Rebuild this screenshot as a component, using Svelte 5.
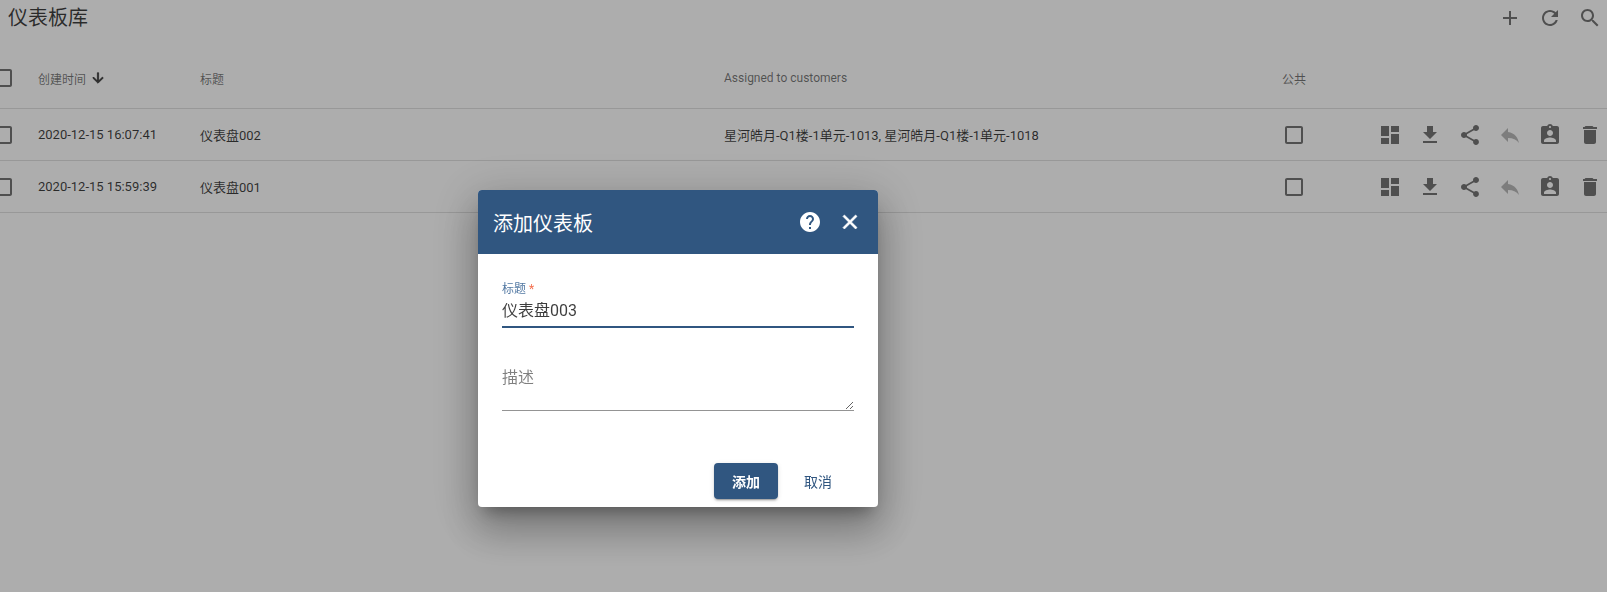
<script lang="ts">
  const paths = {
    add: 'M19 13h-6v6h-2v-6H5v-2h6V5h2v6h6v2z',
    refresh: 'M17.65 6.35C16.2 4.9 14.21 4 12 4c-4.42 0-7.99 3.58-7.99 8s3.57 8 7.99 8c3.73 0 6.84-2.55 7.73-6h-2.08c-.82 2.33-3.04 4-5.65 4-3.31 0-6-2.69-6-6s2.69-6 6-6c1.66 0 3.14.69 4.22 1.78L13 11h7V4l-2.35 2.35z',
    search: 'M15.5 14h-.79l-.28-.27C15.41 12.59 16 11.11 16 9.5 16 5.91 13.09 3 9.5 3S3 5.91 3 9.5 5.91 16 9.5 16c1.61 0 3.09-.59 4.23-1.57l.27.28v.79l5 4.99L20.49 19l-4.99-5zm-6 0C7.01 14 5 11.99 5 9.5S7.01 5 9.5 5 14 7.01 14 9.5 11.99 14 9.5 14z',
    dashboard: 'M3 13h8V3H3v10zm0 8h8v-6H3v6zm10 0h8V11h-8v10zm0-18v6h8V3h-8z',
    download: 'M19 9h-4V3H9v6H5l7 7 7-7zM5 18v2h14v-2H5z',
    share: 'M18 16.08c-.76 0-1.44.3-1.96.77L8.91 12.7c.05-.23.09-.46.09-.7s-.04-.47-.09-.7l7.05-4.11c.54.5 1.25.81 2.04.81 1.66 0 3-1.34 3-3s-1.34-3-3-3-3 1.34-3 3c0 .24.04.47.09.7L8.04 9.81C7.5 9.31 6.79 9 6 9c-1.66 0-3 1.34-3 3s1.34 3 3 3c.79 0 1.5-.31 2.04-.81l7.12 4.16c-.05.21-.08.43-.08.65 0 1.61 1.31 2.92 2.92 2.92 1.61 0 2.92-1.31 2.92-2.92s-1.31-2.92-2.92-2.92z',
    reply: 'M10 9V5l-7 7 7 7v-4.1c5 0 8.5 1.6 11 5.1-1-5-4-10-11-11z',
    assign: 'M19 3h-4.18C14.4 1.84 13.3 1 12 1c-1.3 0-2.4.84-2.82 2H5c-1.1 0-2 .9-2 2v14c0 1.1.9 2 2 2h14c1.1 0 2-.9 2-2V5c0-1.1-.9-2-2-2zm-7 0c.55 0 1 .45 1 1s-.45 1-1 1-1-.45-1-1 .45-1 1-1zm0 4c1.66 0 3 1.34 3 3s-1.34 3-3 3-3-1.34-3-3 1.34-3 3-3zm6 12H6v-1.4c0-2 4-3.1 6-3.1s6 1.1 6 3.1V19z',
    trash: 'M6 19c0 1.1.9 2 2 2h8c1.1 0 2-.9 2-2V7H6v12zM19 4h-3.5l-1-1h-7l-1 1H5v2h14V4z',
    help: 'M12 2C6.48 2 2 6.48 2 12s4.48 10 10 10 10-4.48 10-10S17.52 2 12 2zm1 17h-2v-2h2v2zm2.07-7.75l-.9.92C13.45 12.9 13 13.5 13 15h-2v-.5c0-1.1.45-2.1 1.17-2.83l1.24-1.26c.37-.36.59-.86.59-1.41 0-1.1-.9-2-2-2s-2 .9-2 2H8c0-2.21 1.79-4 4-4s4 1.79 4 4c0 .88-.36 1.68-.93 2.25z',
    close: 'M19 6.41L17.59 5 12 10.59 6.41 5 5 6.41 10.59 12 5 17.59 6.41 19 12 13.41 17.59 19 19 17.59 13.41 12z',
    box: 'M19 5v14H5V5h14m0-2H5c-1.1 0-2 .9-2 2v14c0 1.1.9 2 2 2h14c1.1 0 2-.9 2-2V5c0-1.1-.9-2-2-2z',
    arrow: 'M20 12l-1.41-1.41L13 16.17V4h-2v12.17l-5.58-5.59L4 12l8 8 8-8z'
  };

  const dashboards = [
    { created: '2020-12-15 16:07:41', title: '仪表盘002', customers: '星河皓月-Q1楼-1单元-1013, 星河皓月-Q1楼-1单元-1018' },
    { created: '2020-12-15 15:59:39', title: '仪表盘001', customers: '' }
  ];

  const toolbar = [paths.add, paths.refresh, paths.search];
  const actions = [
    { d: paths.dashboard },
    { d: paths.download },
    { d: paths.share },
    { d: paths.reply, off: true },
    { d: paths.assign },
    { d: paths.trash }
  ];
</script>

{#snippet icon(d: string, cls = '')}
  <svg class="icon {cls}" viewBox="0 0 24 24" aria-hidden="true"><path {d} /></svg>
{/snippet}

<div class="page">
  <header class="topbar">
    <h1>仪表板库</h1>
    <div class="tools">
      {#each toolbar as d}
        <span class="btn">{@render icon(d)}</span>
      {/each}
    </div>
  </header>

  <div class="row head">
    <span>{@render icon(paths.box)}</span>
    <span class="sorted">创建时间 {@render icon(paths.arrow, 'sort')}</span>
    <span>标题</span>
    <span>Assigned to customers</span>
    <span>公共</span>
    <span></span>
  </div>

  {#each dashboards as item}
    <div class="row">
      <span>{@render icon(paths.box)}</span>
      <span>{item.created}</span>
      <span>{item.title}</span>
      <span>{item.customers}</span>
      <span>{@render icon(paths.box)}</span>
      <span class="actions">
        {#each actions as a}
          <span class="btn" class:off={a.off}>{@render icon(a.d)}</span>
        {/each}
      </span>
    </div>
  {/each}
</div>

<div class="overlay">
  <section class="dialog">
    <header class="dialog-head">
      <h2>添加仪表板</h2>
      <span class="btn">{@render icon(paths.help)}</span>
      <span class="btn">{@render icon(paths.close, 'bold')}</span>
    </header>

    <div class="dialog-body">
      <label class="field focused">
        <span class="label">标题 <em>*</em></span>
        <input value="仪表盘003" />
      </label>
      <label class="field">
        <textarea placeholder="描述" rows="2"></textarea>
      </label>
    </div>

    <footer class="dialog-foot">
      <button class="primary">添加</button>
      <button class="plain">取消</button>
    </footer>
  </section>
</div>

<style>
  :global(body) {
    overflow: hidden;
    background: #fff;
    font-family: Roboto, "Noto Sans CJK SC", sans-serif;
  }

  .page {
    width: 1619px;
    margin-left: -9px;
    color: rgba(0, 0, 0, 0.76);
  }

  .topbar {
    display: flex;
    justify-content: space-between;
    height: 48px;
    padding-left: 17px;
    box-sizing: border-box;
  }

  h1 {
    margin: 0;
    font-size: 20px;
    font-weight: 400;
    line-height: 36px;
  }

  .tools {
    display: flex;
    height: 36px;
  }

  .btn {
    display: inline-flex;
    align-items: center;
    justify-content: center;
    width: 40px;
    height: 36px;
  }

  .btn.off {
    opacity: 0.5;
  }

  .icon {
    display: block;
    width: 24px;
    height: 24px;
    fill: rgba(0, 0, 0, 0.54);
  }

  .row {
    display: grid;
    grid-template-columns: 47px 162px 524px 558px 88px 240px;
    align-items: center;
    height: 52px;
    border-bottom: 1px solid rgba(0, 0, 0, 0.12);
    box-sizing: border-box;
    font-size: 13px;
  }

  .row.head {
    height: 61px;
    font-size: 12px;
    color: rgba(0, 0, 0, 0.54);
  }

  .sorted {
    display: flex;
    align-items: center;
    gap: 2px;
  }

  .icon.sort {
    width: 16px;
    height: 16px;
    margin-left: 2px;
    fill: rgba(0, 0, 0, 0.7);
    stroke: rgba(0, 0, 0, 0.7);
    stroke-width: 1;
  }

  .actions {
    display: flex;
    justify-content: flex-end;
  }

  .overlay {
    position: fixed;
    inset: 0;
    padding: 190px 0 0 478px;
    background: rgba(0, 0, 0, 0.32);
  }

  .dialog {
    width: 400px;
    height: 317px;
    display: flex;
    flex-direction: column;
    border-radius: 4px;
    overflow: hidden;
    background: #fff;
    box-shadow: 0 11px 15px -7px rgba(0, 0, 0, 0.3), 0 24px 38px 3px rgba(0, 0, 0, 0.2), 0 9px 46px 8px rgba(0, 0, 0, 0.16);
  }

  .dialog-head {
    display: flex;
    align-items: center;
    height: 64px;
    flex: none;
    padding: 0 8px 0 15px;
    background: #305680;
    color: #fff;
  }

  .dialog-head h2 {
    flex: 1;
    margin: 0;
    font-size: 20px;
    font-weight: 400;
  }

  .dialog-head .icon {
    fill: #fff;
  }

  .dialog-head .icon.bold {
    stroke: #fff;
    stroke-width: 0.7;
  }

  .dialog-body {
    flex: 1;
    padding: 28px 24px 0;
  }

  .field {
    display: block;
    margin-bottom: 32px;
  }

  .label {
    display: block;
    font-size: 12px;
    line-height: 14px;
    color: #5379a3;
  }

  .label em {
    font-style: normal;
    color: #f4704f;
  }

  input,
  textarea {
    display: block;
    width: 100%;
    box-sizing: border-box;
    margin: 0;
    padding: 0;
    border: 0;
    outline: 0;
    background: none;
    font: inherit;
    font-size: 16px;
    color: rgba(0, 0, 0, 0.76);
  }

  input {
    height: 32px;
    padding-bottom: 4px;
    border-bottom: 2px solid #305680;
  }

  textarea {
    height: 51px;
    padding-top: 8px;
    line-height: 20px;
    border-bottom: 1px solid rgba(0, 0, 0, 0.42);
    resize: vertical;
  }

  textarea::placeholder {
    color: rgba(0, 0, 0, 0.5);
  }

  .dialog-foot {
    display: flex;
    justify-content: flex-end;
    gap: 8px;
    padding: 0 28px 8px 0;
  }

  button {
    min-width: 64px;
    height: 36px;
    border: 0;
    border-radius: 4px;
    font: inherit;
    font-size: 14px;
    font-weight: 500;
    background: none;
  }

  .primary {
    background: #305680;
    color: #fff;
    font-weight: 700;
    box-shadow: 0 3px 1px -2px rgba(0, 0, 0, 0.2), 0 2px 2px 0 rgba(0, 0, 0, 0.14), 0 1px 5px 0 rgba(0, 0, 0, 0.12);
  }

  .plain {
    color: #305680;
    font-weight: 400;
  }
</style>
